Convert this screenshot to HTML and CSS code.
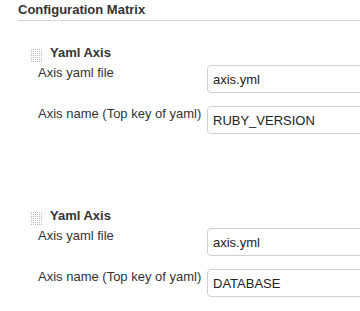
FILE: index.html
```html
<!DOCTYPE html>
<html>
<head>
<meta charset="utf-8">
<link rel="stylesheet" href="styles.css">
</head>
<body>
<div class="section">
  <div class="section-header">Configuration Matrix</div>
  <div class="axis">
    <div class="axis-head">
      <svg class="handle" width="11" height="13" viewBox="0 0 11 13">
        <defs>
          <pattern id="dots" width="2" height="2" patternUnits="userSpaceOnUse">
            <rect x="0" y="0" width="1" height="1" fill="#b8b8b8"/>
          </pattern>
        </defs>
        <rect width="11" height="13" fill="url(#dots)"/>
      </svg>
      <span class="axis-title">Yaml Axis</span>
    </div>
    <div class="row"><label class="label">Axis yaml file</label><input class="field" type="text" value="axis.yml"></div>
    <div class="row"><label class="label">Axis name (Top key of yaml)</label><input class="field" type="text" value="RUBY_VERSION"></div>
  </div>
  <div class="axis">
    <div class="axis-head">
      <svg class="handle" width="11" height="13" viewBox="0 0 11 13">
        <rect width="11" height="13" fill="url(#dots)"/>
      </svg>
      <span class="axis-title">Yaml Axis</span>
    </div>
    <div class="row"><label class="label">Axis yaml file</label><input class="field" type="text" value="axis.yml"></div>
    <div class="row"><label class="label">Axis name (Top key of yaml)</label><input class="field" type="text" value="DATABASE"></div>
  </div>
</div>
</body>
</html>
```
FILE: styles.css
```css
html, body {
  margin: 0;
  padding: 0;
  background: #fff;
  overflow: hidden;
}
body {
  font-family: "Liberation Sans", Arial, sans-serif;
  font-size: 13px;
  line-height: 15px;
  color: #333;
}
.section {
  padding-left: 18px;
  padding-top: 2px;
  overflow: hidden;
}
.section-header {
  font-weight: bold;
  padding-bottom: 3px;
  border-bottom: 1px solid #d6d6d6;
}
.axis {
  display: flex;
  flex-direction: column;
}
.section-header + .axis {
  margin-top: 24px;
}
.axis + .axis {
  margin-top: 74px;
}
.axis-head {
  display: flex;
  align-items: flex-start;
  padding-left: 13px;
  gap: 8px;
  height: 15px;
}
.handle {
  display: block;
  margin-top: 4px;
}
.axis-title {
  font-weight: bold;
}
.row {
  display: flex;
  align-items: flex-start;
  padding-left: 20px;
}
.axis-head + .row {
  margin-top: 5px;
}
.row + .row {
  margin-top: 13px;
}
.label {
  width: 169px;
  flex: none;
}
.field {
  flex: none;
  width: 160px;
  height: 28px;
  box-sizing: border-box;
  margin: 0;
  padding: 0 5px;
  border: 1px solid #cfcfcf;
  border-radius: 4px;
  font-family: "Liberation Sans", Arial, sans-serif;
  font-size: 13px;
  color: #222;
  background: #fff;
  outline: none;
}
```
